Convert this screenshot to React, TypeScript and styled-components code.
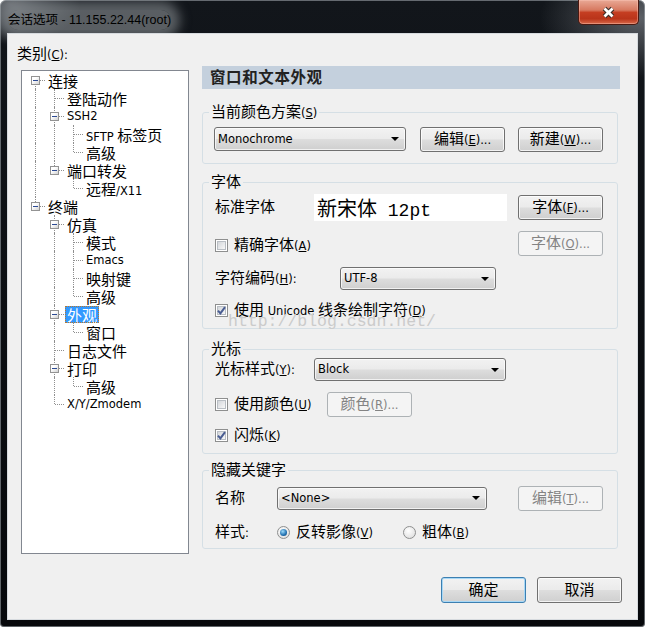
import React from "react";
import styled, { createGlobalStyle, css } from "styled-components";

const GlobalStyle = createGlobalStyle`
  html, body {
    margin: 0;
    padding: 0;
    background: #fff;
  }
  body {
    font-family: "DejaVu Sans", "Noto Sans CJK SC", sans-serif;
    font-size: 11px;
    color: #000;
  }
`;

// CJK runs get their own size; latin runs use a tahoma-like face
const HAN = /([\u2e80-\u9fff\u3000-\u303f\uff00-\uffef]+)/;

const Run = styled.span`
  white-space: nowrap;
`;

const Han = styled.span`
  font-family: "Noto Sans CJK SC", sans-serif;
  font-size: var(--han, 15px);
`;

const Lat = styled.span`
  font-family: var(--lat-font, "DejaVu Sans"), "Noto Sans CJK SC", sans-serif;
  font-size: var(--lat, 11.5px);
`;

function Txt({ children }: { children: string }) {
  return (
    <Run>
      {children
        .split(HAN)
        .filter(Boolean)
        .map((part, i) =>
          HAN.test(part) ? (
            <Han key={i}>{part}</Han>
          ) : (
            <Lat key={i}>
              {part.split(/&(.)/).map((p, j) => (j % 2 ? <u key={j}>{p}</u> : p))}
            </Lat>
          )
        )}
    </Run>
  );
}

/* ---------- window frame ---------- */

const Window = styled.div`
  position: relative;
  width: 645px;
  height: 627px;
  display: flex;
  flex-direction: column;
  overflow: hidden;
  border-radius: 6px 6px 4px 4px;
  background: radial-gradient(ellipse 70px 40px at 10px 4px, rgba(120, 124, 130, 0.8), transparent),
    radial-gradient(ellipse 100px 60px at 640px 18px, rgba(100, 104, 110, 0.9), transparent),
    linear-gradient(#12161b, #06080b);
  box-shadow: inset 0 0 0 1px rgba(170, 176, 182, 0.55);
`;

const TitleBar = styled.div`
  flex: none;
  height: 34px;
  display: flex;
  align-items: flex-start;
  justify-content: space-between;
  padding: 0 6px 0 8px;
`;

const Title = styled.div`
  margin-top: 10px;
  line-height: 18px;
  --han: 12.5px;
  --lat: 12.5px;
  --lat-font: "Liberation Sans";
  background: rgba(150, 154, 159, 0.55);
  box-shadow: 0 0 11px 9px rgba(150, 154, 159, 0.55);
  border-radius: 10px;
`;

const CloseButton = styled.div`
  width: 61px;
  height: 25px;
  box-sizing: border-box;
  display: flex;
  align-items: center;
  justify-content: center;
  border: 1px solid #4a1911;
  border-top: none;
  border-radius: 0 0 5px 5px;
  background: linear-gradient(#e9a996 0%, #d77960 42%, #c53e22 52%, #b9341a 78%, #d8694a 100%);
  box-shadow: inset 0 0 0 1px rgba(255, 205, 190, 0.4);
`;

const Client = styled.div`
  flex: 1;
  margin: 0 8px 8px;
  background: #f0f0f0;
  box-shadow: 0 0 0 1px #d6dade;
  display: flex;
  flex-direction: column;
  line-height: 18px;
`;

const Main = styled.div`
  display: flex;
  align-items: flex-start;
`;

const Footer = styled.div`
  margin-top: auto;
  margin-bottom: 16px;
  padding-right: 15px;
  display: flex;
  justify-content: flex-end;
  gap: 11px;
`;

const Watermark = styled.div`
  position: absolute;
  left: 228px;
  top: 313px;
  font-family: "Liberation Mono", monospace;
  font-size: 16.5px;
  line-height: 18px;
  color: #cbcbcb;
  pointer-events: none;
`;

/* ---------- category tree ---------- */

const Sidebar = styled.div`
  flex: none;
  padding: 11px 0 0 9px;
`;

const CategoryLabel = styled.div`
  height: 16px;
  line-height: 16px;
`;

const Tree = styled.div`
  margin: 9px 0 0 4px;
  width: 168px;
  height: 484px;
  box-sizing: border-box;
  border: 1px solid #828790;
  background: #fff;
  padding-left: 4px;
  --han: 15px;
`;

const TreeRow = styled.div`
  display: flex;
  align-items: center;
  height: 18px;
`;

type Kind = "pipe" | "blank" | "tee" | "elbow" | "first";

const vertical: Record<Kind, string> = {
  pipe: "top: 0; bottom: 0;",
  tee: "top: 0; bottom: 0;",
  elbow: "top: 0; height: 9px;",
  first: "top: 9px; bottom: 0;",
  blank: "display: none;",
};

const Guide = styled.span<{ $kind: Kind }>`
  position: relative;
  flex: none;
  width: 19px;
  height: 18px;

  &::before {
    content: "";
    position: absolute;
    left: 9px;
    border-left: 1px dotted #8f8f8f;
    ${(p) => vertical[p.$kind]}
  }
  &::after {
    content: "";
    position: absolute;
    left: 10px;
    top: 9px;
    width: 9px;
    border-top: 1px dotted #8f8f8f;
    ${(p) => (p.$kind === "pipe" || p.$kind === "blank") && "display: none;"}
  }
`;

const Expander = styled.span`
  position: absolute;
  left: 5px;
  top: 5px;
  z-index: 1;
  width: 9px;
  height: 9px;
  box-sizing: border-box;
  border: 1px solid #939393;
  background: linear-gradient(135deg, #ffffff 35%, #d2d2d2);

  &::after {
    content: "";
    position: absolute;
    left: 1px;
    top: 3px;
    width: 5px;
    height: 1px;
    background: #2b4a94;
  }
`;

const ItemText = styled.span<{ $selected?: boolean }>`
  margin-left: 1px;
  padding: 0 2px;
  height: 17px;
  line-height: 17px;
  white-space: nowrap;
  ${(p) =>
    p.$selected &&
    css`
      background: #3399ff;
      color: #fff;
      outline: 1px dotted #b8772c;
      outline-offset: -1px;
    `}
`;

type Node = { label: string; selected?: boolean; children?: Node[] };

const TREE: Node[] = [
  {
    label: "连接",
    children: [
      { label: "登陆动作" },
      { label: "SSH2", children: [{ label: "SFTP 标签页" }, { label: "高级" }] },
      { label: "端口转发", children: [{ label: "远程/X11" }] },
    ],
  },
  {
    label: "终端",
    children: [
      {
        label: "仿真",
        children: [{ label: "模式" }, { label: "Emacs" }, { label: "映射键" }, { label: "高级" }],
      },
      { label: "外观", selected: true, children: [{ label: "窗口" }] },
      { label: "日志文件" },
      { label: "打印", children: [{ label: "高级" }] },
      { label: "X/Y/Zmodem" },
    ],
  },
];

type Row = { label: string; guides: boolean[]; kind: Kind; open: boolean; selected?: boolean };

function flatten(nodes: Node[], guides: boolean[], root: boolean, out: Row[] = []) {
  nodes.forEach((n, i) => {
    const last = i === nodes.length - 1;
    const kind: Kind = root && i === 0 && !last ? "first" : last ? "elbow" : "tee";
    out.push({ label: n.label, guides, kind, open: !!n.children, selected: n.selected });
    if (n.children) flatten(n.children, [...guides, !last], false, out);
  });
  return out;
}

const rows = flatten(TREE, [], true);

function CategoryTree() {
  return (
    <Tree>
      {rows.map((r, i) => (
        <TreeRow key={i}>
          {r.guides.map((g, j) => (
            <Guide key={j} $kind={g ? "pipe" : "blank"} />
          ))}
          <Guide $kind={r.kind}>{r.open && <Expander />}</Guide>
          <ItemText $selected={r.selected}>
            <Txt>{r.label}</Txt>
          </ItemText>
        </TreeRow>
      ))}
    </Tree>
  );
}

/* ---------- option panel ---------- */

const Panel = styled.div`
  flex: none;
  width: 418px;
  margin: 32px 0 0 13px;
  display: flex;
  flex-direction: column;
  --han: 15px;
`;

const Header = styled.div`
  height: 23px;
  display: flex;
  align-items: center;
  padding-left: 8px;
  background: #c4d0dd;
  color: #222;
  font-weight: 700;
  letter-spacing: 0.6px;
  --han: 15.5px;
`;

const Group = styled.fieldset<{ $mt: number; $pt: number; $pb: number }>`
  margin: ${(p) => p.$mt}px 2px 0 0;
  padding: ${(p) => p.$pt}px 14px ${(p) => p.$pb}px 0;
  border: 1px solid #d5dfe5;
  border-radius: 3px;
  min-width: 0;
`;

const Legend = styled.legend`
  margin-left: 6px;
  padding: 0 2px;
  height: 18px;
  line-height: 15px;
`;

const Stack = styled.div<{ $pl: number }>`
  display: flex;
  flex-direction: column;
  padding-left: ${(p) => p.$pl}px;
`;

const FormRow = styled.div<{ $h: number; $mt?: number; $end?: boolean }>`
  display: flex;
  align-items: ${(p) => (p.$end ? "flex-end" : "center")};
  height: ${(p) => p.$h}px;
  margin-top: ${(p) => p.$mt ?? 0}px;
`;

const FieldLabel = styled.div<{ $w: number }>`
  flex: none;
  width: ${(p) => p.$w}px;
  white-space: nowrap;
`;

const Button = styled.div<{ $w?: number; $h?: number; $disabled?: boolean; $default?: boolean }>`
  flex: none;
  box-sizing: border-box;
  width: ${(p) => p.$w ?? 85}px;
  height: ${(p) => p.$h ?? 25}px;
  display: flex;
  align-items: center;
  justify-content: center;
  border: 1px solid #707070;
  border-radius: 3px;
  background: linear-gradient(#f2f2f2 0%, #ebebeb 48%, #dddddd 52%, #cfcfcf 100%);
  box-shadow: inset 0 0 0 1px rgba(255, 255, 255, 0.75);
  ${(p) =>
    p.$default &&
    css`
      border-color: #3c7fb1;
      box-shadow: inset 0 0 0 1px #a8d8f6;
    `}
  ${(p) =>
    p.$disabled &&
    css`
      border-color: #adb2b5;
      background: #f4f4f4;
      box-shadow: none;
      color: #838383;
    `}
`;

const Push = styled.div`
  margin-left: auto;
`;

const SelectBox = styled.div<{ $w: number; $h: number }>`
  flex: none;
  box-sizing: border-box;
  width: ${(p) => p.$w}px;
  height: ${(p) => p.$h}px;
  display: flex;
  align-items: center;
  justify-content: space-between;
  padding: 0 6px 0 3px;
  border: 1px solid #707070;
  border-radius: 3px;
  background: linear-gradient(#f2f2f2 0%, #ebebeb 48%, #dddddd 52%, #cfcfcf 100%);
  box-shadow: inset 0 0 0 1px rgba(255, 255, 255, 0.7);
`;

const Arrow = styled.span`
  width: 0;
  height: 0;
  border-left: 4px solid transparent;
  border-right: 4px solid transparent;
  border-top: 4px solid #000;
`;

function Select({ w, h = 23, value }: { w: number; h?: number; value: string }) {
  return (
    <SelectBox $w={w} $h={h}>
      <Txt>{value}</Txt>
      <Arrow />
    </SelectBox>
  );
}

const Preview = styled.div`
  flex: none;
  width: 193px;
  height: 27px;
  box-sizing: border-box;
  padding-left: 3px;
  background: #fff;
  line-height: 27px;
  white-space: nowrap;
`;

const PreviewHan = styled.span`
  font-family: "Noto Sans CJK SC", sans-serif;
  font-size: 20px;
`;

const PreviewLat = styled.span`
  font-family: "Liberation Mono", monospace;
  font-size: 18px;
`;

const Choice = styled.div<{ $w?: number }>`
  flex: none;
  display: flex;
  align-items: center;
  gap: 6px;
  ${(p) => p.$w && `width: ${p.$w}px;`}
`;

const Box = styled.span`
  position: relative;
  flex: none;
  width: 13px;
  height: 13px;
  box-sizing: border-box;
  border: 1px solid #8e8f8f;
  background: #fff;
  display: flex;
  align-items: center;
  justify-content: center;

  &::before {
    content: "";
    position: absolute;
    inset: 1px;
    border: 1px solid #b9bec4;
    background: linear-gradient(135deg, #d3d6da, #f8f8f8);
  }
  svg {
    position: relative;
  }
`;

const RadioDot = styled.span<{ $on?: boolean }>`
  position: relative;
  flex: none;
  width: 13px;
  height: 13px;
  box-sizing: border-box;
  border: 1px solid #8e8f8f;
  border-radius: 50%;
  background: radial-gradient(circle at 40% 35%, #ffffff, #d9d9d9);

  ${(p) =>
    p.$on &&
    css`
      &::after {
        content: "";
        position: absolute;
        left: 2px;
        top: 2px;
        width: 7px;
        height: 7px;
        border-radius: 50%;
        background: radial-gradient(circle at 40% 35%, #9edcfb, #1f6fb0 60%, #0e3d6a);
      }
    `}
`;

function Check({ label, on, w }: { label: string; on?: boolean; w?: number }) {
  return (
    <Choice $w={w}>
      <Box>
        {on && (
          <svg width="9" height="9" viewBox="0 0 9 9">
            <path d="M1 4.6 L3.4 7.4 L8 1.2" fill="none" stroke="#4a5d92" strokeWidth="2" />
          </svg>
        )}
      </Box>
      <Txt>{label}</Txt>
    </Choice>
  );
}

function Radio({ label, on, w }: { label: string; on?: boolean; w?: number }) {
  return (
    <Choice $w={w}>
      <RadioDot $on={on} />
      <Txt>{label}</Txt>
    </Choice>
  );
}

export default function App() {
  return (
    <>
      <GlobalStyle />
      <Window>
        <TitleBar>
          <Title>
            <Txt>会话选项 - 11.155.22.44(root)</Txt>
          </Title>
          <CloseButton>
            <svg width="15" height="15" viewBox="0 0 15 15">
              <path d="M3.5 3.5 L11.5 11.5 M11.5 3.5 L3.5 11.5" stroke="#3a2c28" strokeWidth="5" />
              <path d="M3.5 3.5 L11.5 11.5 M11.5 3.5 L3.5 11.5" stroke="#fff" strokeWidth="2.8" />
            </svg>
          </CloseButton>
        </TitleBar>

        <Client>
          <Main>
            <Sidebar>
              <CategoryLabel>
                <Txt>类别(&C):</Txt>
              </CategoryLabel>
              <CategoryTree />
            </Sidebar>

            <Panel>
              <Header>
                <Txt>窗口和文本外观</Txt>
              </Header>

              <Group $mt={14} $pt={5} $pb={11}>
                <Legend>
                  <Txt>当前颜色方案(&S)</Txt>
                </Legend>
                <Stack $pl={11}>
                  <FormRow $h={26}>
                    <Select w={192} h={24} value="Monochrome" />
                    <Push />
                    <Button>
                      <Txt>编辑(&E)...</Txt>
                    </Button>
                    <Button style={{ marginLeft: 13 }}>
                      <Txt>新建(&W)...</Txt>
                    </Button>
                  </FormRow>
                </Stack>
              </Group>

              <Group $mt={9} $pt={3} $pb={10}>
                <Legend>
                  <Txt>字体</Txt>
                </Legend>
                <Stack $pl={12}>
                  <FormRow $h={27}>
                    <FieldLabel $w={99}>
                      <Txt>标准字体</Txt>
                    </FieldLabel>
                    <Preview>
                      <PreviewHan>新宋体</PreviewHan>
                      <PreviewLat> 12pt</PreviewLat>
                    </Preview>
                    <Push />
                    <Button>
                      <Txt>字体(&F)...</Txt>
                    </Button>
                  </FormRow>
                  <FormRow $h={25} $mt={10} $end>
                    <Check label="精确字体(&A)" />
                    <Push />
                    <Button $disabled>
                      <Txt>字体(&O)...</Txt>
                    </Button>
                  </FormRow>
                  <FormRow $h={23} $mt={11}>
                    <FieldLabel $w={125}>
                      <Txt>字符编码(&H):</Txt>
                    </FieldLabel>
                    <Select w={156} value="UTF-8" />
                  </FormRow>
                  <FormRow $h={16} $mt={12}>
                    <Check on label="使用 Unicode 线条绘制字符(&D)" />
                  </FormRow>
                </Stack>
              </Group>

              <Group $mt={11} $pt={0} $pb={10}>
                <Legend>
                  <Txt>光标</Txt>
                </Legend>
                <Stack $pl={12}>
                  <FormRow $h={23}>
                    <FieldLabel $w={99}>
                      <Txt>光标样式(&Y):</Txt>
                    </FieldLabel>
                    <Select w={192} value="Block" />
                  </FormRow>
                  <FormRow $h={26} $mt={10}>
                    <Check label="使用颜色(&U)" w={112} />
                    <Button $disabled>
                      <Txt>颜色(&R)...</Txt>
                    </Button>
                  </FormRow>
                  <FormRow $h={16} $mt={10}>
                    <Check on label="闪烁(&K)" />
                  </FormRow>
                </Stack>
              </Group>

              <Group $mt={7} $pt={7} $pb={8}>
                <Legend>
                  <Txt>隐藏关键字</Txt>
                </Legend>
                <Stack $pl={12}>
                  <FormRow $h={24}>
                    <FieldLabel $w={62}>
                      <Txt>名称</Txt>
                    </FieldLabel>
                    <Select w={210} value="<None>" />
                    <Push />
                    <Button $disabled>
                      <Txt>编辑(&T)...</Txt>
                    </Button>
                  </FormRow>
                  <FormRow $h={16} $mt={14}>
                    <FieldLabel $w={62}>
                      <Txt>样式:</Txt>
                    </FieldLabel>
                    <Radio on label="反转影像(&V)" w={126} />
                    <Radio label="粗体(&B)" />
                  </FormRow>
                </Stack>
              </Group>
            </Panel>
          </Main>

          <Footer>
            <Button $default $h={26}>
              <Txt>确定</Txt>
            </Button>
            <Button $h={26}>
              <Txt>取消</Txt>
            </Button>
          </Footer>
        </Client>

        <Watermark>http://blog.csdn.net/</Watermark>
      </Window>
    </>
  );
}
